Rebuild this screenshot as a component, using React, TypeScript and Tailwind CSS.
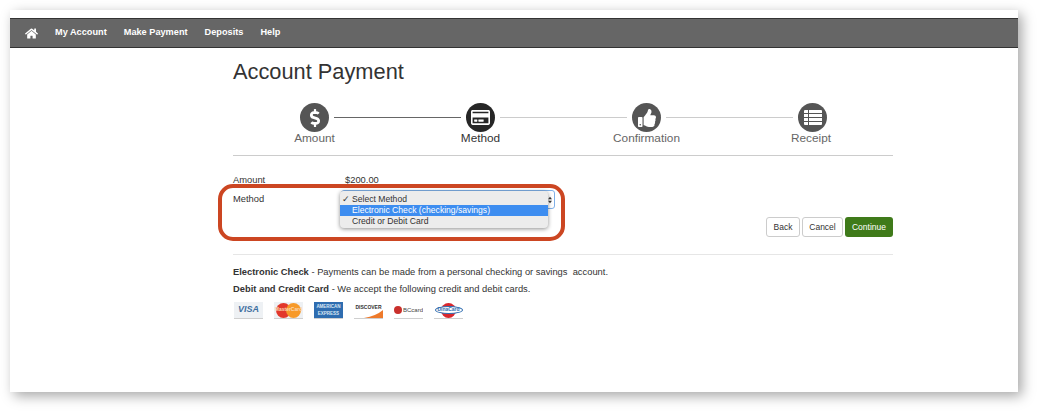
import { FaDollarSign, FaHome, FaRegCreditCard, FaThumbsUp } from "react-icons/fa"
import type { ReactNode } from "react"

const navLinks = ["My Account", "Make Payment", "Deposits", "Help"]

function ListIcon() {
  return (
    <svg width="18" height="15" viewBox="0 0 18 15" fill="#fff">
      <rect x="0" y="0" width="18" height="15" rx="1" />
      <g fill="#555">
        <rect x="0" y="3" width="18" height="1" />
        <rect x="0" y="7" width="18" height="1" />
        <rect x="0" y="11" width="18" height="1" />
        <rect x="4" y="0" width="1" height="15" />
      </g>
    </svg>
  )
}

function SelectArrows() {
  return (
    <svg width="4" height="8" viewBox="0 0 5 8" fill="#333">
      <path d="M2.5 0 L5 3 H0 Z M2.5 8 L5 5 H0 Z" />
    </svg>
  )
}

function Step({ icon, label, active, labelClassName }: { icon: ReactNode; label: string; active?: boolean; labelClassName?: string }) {
  return (
    <div className="flex w-[29px] shrink-0 flex-col items-center">
      <div className={`flex h-[29px] w-[29px] shrink-0 items-center justify-center rounded-full text-white ${active ? "bg-[#262626]" : "bg-[#555555]"}`}>
        {icon}
      </div>
      <span className={`-mt-px whitespace-nowrap text-[11.8px] leading-[14px] ${active ? "text-[#333333]" : "text-[#666666]"} ${labelClassName ?? ""}`}>{label}</span>
    </div>
  )
}

function Line({ dark }: { dark?: boolean }) {
  return <div className={`mx-[5px] mt-[14px] h-px flex-1 ${dark ? "bg-[#666666]" : "bg-[#cccccc]"}`} />
}

function CardTile({ children, className }: { children: ReactNode; className?: string }) {
  return (
    <div className={`flex h-[17px] w-[29px] items-center justify-center overflow-hidden border-b border-[#cfcfcf] ${className ?? ""}`}>
      {children}
    </div>
  )
}

function CardLogos() {
  return (
    <div className="ml-px mt-[7px] flex gap-[11px]">
      <CardTile className="bg-[#eef1f4]">
        <span className="text-[9px] font-bold italic text-[#3f6f9f]">VISA</span>
      </CardTile>
      <CardTile className="relative bg-[#eef1f4]">
        <div className="h-[15px] w-[15px] rounded-full bg-[#e2372b]" />
        <div className="-ml-[5px] h-[15px] w-[15px] rounded-full bg-[#f79a2a]" />
        <span className="absolute text-[5px] font-bold text-[#fbd9b5]">MasterCard</span>
      </CardTile>
      <CardTile className="flex-col bg-[#2f6db0] leading-[7px]">
        <span className="text-[4.5px] font-bold text-[#dbe7f3]">AMERICAN</span>
        <span className="text-[4.5px] font-bold text-[#dbe7f3]">EXPRESS</span>
      </CardTile>
      <CardTile className="relative items-start bg-white">
        <span className="mt-[2px] text-[5px] font-bold text-[#333333]">DISCOVER</span>
        <svg className="absolute bottom-0 left-0" width="29" height="9" viewBox="0 0 29 9">
          <path d="M10 9 Q22 7 29 1 V9 Z" fill="#ee7a2b" />
        </svg>
      </CardTile>
      <CardTile className="gap-px bg-white">
        <div className="h-[8px] w-[8px] rounded-full bg-[#c9302c]" />
        <span className="text-[6px] text-[#444444]">BCcard</span>
      </CardTile>
      <CardTile className="relative bg-white">
        <div className="absolute top-px h-[15px] w-[15px] rounded-full bg-[#d9272e]" />
        <div className="z-10 flex h-[8px] w-[28px] items-center justify-center rounded-[50%] border border-[#2f6db0] bg-white">
          <span className="text-[5px] font-bold text-[#2f6db0]">DinaCard</span>
        </div>
      </CardTile>
    </div>
  )
}

export default function App() {
  return (
    <div className="h-[413px] w-[1038px] overflow-hidden bg-white pl-[10px] pt-[10px] font-['Liberation_Sans',Arial,sans-serif]">
      <div className="h-[382px] w-[1008px] bg-white pt-[8px] shadow-[4px_4px_12px_rgba(0,0,0,0.35)]">
        <nav className="flex h-[30px] items-center gap-[17px] border-y border-[#333333] bg-[#666666] pl-[15px] text-[9.2px] font-bold text-white">
          <FaHome className="text-[13px] text-white" />
          {navLinks.map((link) => (
            <a key={link} href="#">{link}</a>
          ))}
        </nav>

        <main className="relative pl-[223px] pr-[125px]">
          <h1 className="pt-[10px] text-[21.8px] leading-[28px] text-[#333333]">Account Payment</h1>

          <div className="mt-[17px] flex h-[53px] border-b border-[#cccccc] pl-[67px] pr-[66px]">
            <Step label="Amount" icon={<FaDollarSign className="text-[18px]" />} />
            <Line dark />
            <Step active label="Method" icon={<FaRegCreditCard className="text-[19px]" />} />
            <Line />
            <Step label="Confirmation" icon={<FaThumbsUp className="text-[18px]" />} />
            <Line />
            <Step label="Receipt" labelClassName="pr-[3px]" icon={<ListIcon />} />
          </div>

          <div className="mt-[15px] flex h-[84px] border-b border-[#e6e6e6] text-[9.35px] text-[#333333]">
            <div className="w-[112px] shrink-0 leading-[19px]">
              <div>Amount</div>
              <div>Method</div>
            </div>
            <div className="flex-1 leading-[19px]">$200.00</div>
            <div className="flex items-start gap-[2px] pt-[46px]">
              <button className="h-[20px] w-[34px] rounded-[3px] border border-[#cccccc] text-[8.5px] text-[#333333]">Back</button>
              <button className="h-[20px] w-[41px] rounded-[3px] border border-[#cccccc] text-[8.5px] text-[#333333]">Cancel</button>
              <button className="h-[20px] w-[48px] rounded-[3px] bg-[#3f7a1a] text-[8.5px] text-white">Continue</button>
            </div>
          </div>

          <div className="mt-[11px] text-[9.35px] text-[#333333]">
            <p className="leading-[12px]"><b>Electronic Check</b> - Payments can be made from a personal checking or savings&nbsp; account.</p>
            <p className="mt-[5px] leading-[12px]"><b>Debit and Credit Card</b> - We accept the following credit and debit cards.</p>
            <CardLogos />
          </div>

          {/* open select menu and the red callout lie over the form */}
          <div className="absolute left-[331px] top-[142px] h-[19px] w-[214px] rounded-[3px] border border-[#7fb0e8]" />
          <div className="absolute left-[330px] top-[143px] w-[208px] rounded-[4px] bg-[#ececec] pb-px pt-[3px] text-[8.6px] leading-[11px] text-[#333333] shadow-[0_1px_4px_rgba(0,0,0,0.45)]">
            <div className="relative pl-[12px]">
              <span className="absolute left-[2px]">✓</span>Select Method
              <span className="absolute right-[-4px] top-[2px]"><SelectArrows /></span>
            </div>
            <div className="bg-[#3d8df0] pl-[12px] text-white">Electronic Check (checking/savings)</div>
            <div className="pl-[12px]">Credit or Debit Card</div>
          </div>
          <div className="absolute left-[208px] top-[136px] h-[57px] w-[347px] rounded-[15px] border-[4px] border-[#cc4622]" />
        </main>
      </div>
    </div>
  )
}
